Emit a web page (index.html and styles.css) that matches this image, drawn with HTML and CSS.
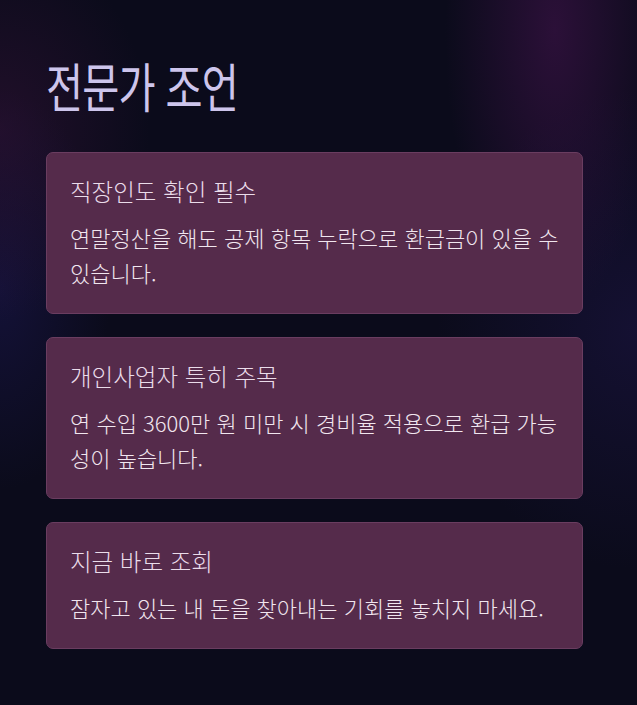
FILE: index.html
```html
<!DOCTYPE html>
<html lang="ko">
<head>
  <meta charset="UTF-8">
  <meta name="viewport" content="width=device-width, initial-scale=1.0">
  <title>전문가 조언</title>
  <link rel="stylesheet" href="styles.css">
</head>
<body>
<section class="advice">
  <h1 class="advice-title">전문가 조언</h1>

  <div class="advice-list">
    <div class="advice-card">
      <h2>직장인도 확인 필수</h2>
      <p>연말정산을 해도 공제 항목 누락으로 환급금이 있을 수 있습니다.</p>
    </div>
    <div class="advice-card">
      <h2>개인사업자 특히 주목</h2>
      <p>연 수입 3600만 원 미만 시 경비율 적용으로 환급 가능성이 높습니다.</p>
    </div>
    <div class="advice-card">
      <h2>지금 바로 조회</h2>
      <p>잠자고 있는 내 돈을 찾아내는 기회를 놓치지 마세요.</p>
    </div>
  </div>
</section>
</body>
</html>
```

FILE: styles.css
```css
html, body {
  margin: 0;
  height: 100%;
}

body {
  font-family: "Noto Sans CJK KR", "Noto Sans", sans-serif;
  background-color: #0b0b1b;
  background-image:
    radial-gradient(ellipse 110px 280px at 555px 30px, rgba(70, 20, 80, 0.55), transparent),
    radial-gradient(ellipse 150px 190px at 0px 130px, rgba(60, 20, 60, 0.45), transparent),
    radial-gradient(ellipse 110px 200px at 0px 290px, rgba(30, 25, 90, 0.45), transparent),
    radial-gradient(ellipse 200px 240px at 637px 330px, rgba(35, 25, 85, 0.4), transparent);
  overflow: hidden;
}

.advice {
  padding: 53px 0 0 46px;
  width: 537px;
}

/* the reference heading face is narrower than Noto, squeeze it a bit */
.advice-title {
  display: inline-block;
  margin: 0 0 35px 0;
  font-size: 53px;
  font-weight: 400;
  line-height: 64px;
  letter-spacing: -1px;
  color: #cdc5ec;
  transform: scaleX(0.76);
  transform-origin: left center;
}

.advice-list {
  display: flex;
  flex-direction: column;
  gap: 23px;
}

.advice-card {
  background: #552b4b;
  border: 1px solid #6a3d60;
  border-radius: 7px;
  padding: 22px 23px 23px;
}

.advice-card h2 {
  margin: 0 0 13px;
  font-size: 23.5px;
  font-weight: 300;
  line-height: 32px;
  color: #eadcea;
}

.advice-card p {
  margin: 0;
  font-size: 22px;
  font-weight: 300;
  line-height: 35px;
  color: #f1e6ef;
}
```
